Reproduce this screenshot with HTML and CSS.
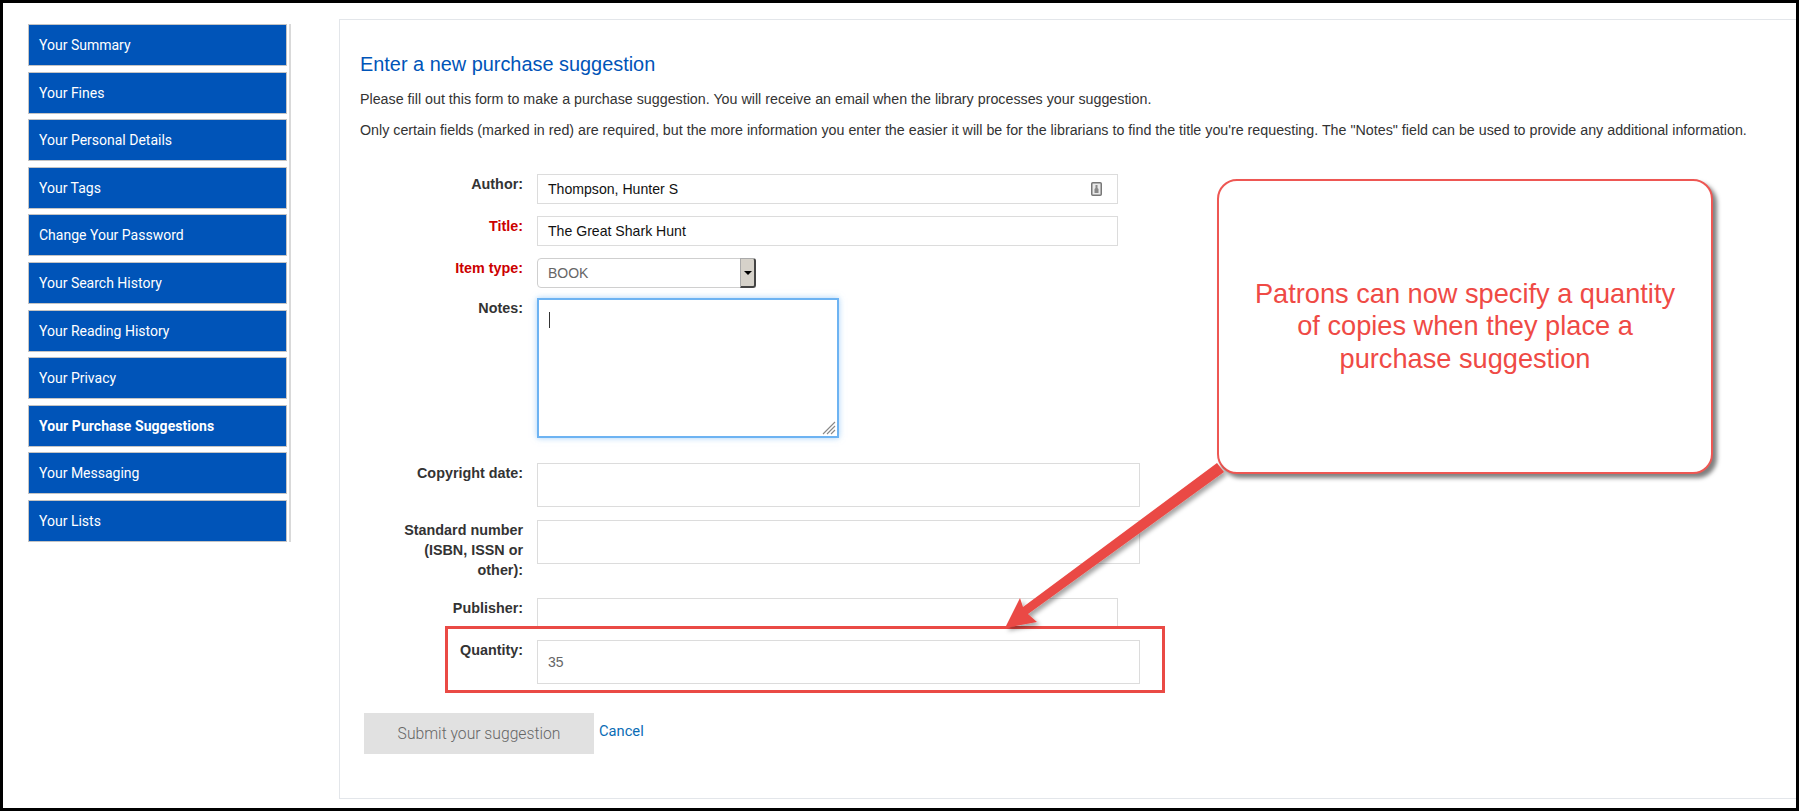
FILE: index.html
```html
<!DOCTYPE html>
<html lang="en">
<head>
<meta charset="utf-8">
<title>Enter a new purchase suggestion</title>
<link rel="stylesheet" href="styles.css">
</head>
<body>
<div class="frame">
  <nav class="side">
    <a class="side-item">Your Summary</a>
    <a class="side-item">Your Fines</a>
    <a class="side-item">Your Personal Details</a>
    <a class="side-item">Your Tags</a>
    <a class="side-item">Change Your Password</a>
    <a class="side-item">Your Search History</a>
    <a class="side-item">Your Reading History</a>
    <a class="side-item">Your Privacy</a>
    <a class="side-item active">Your Purchase Suggestions</a>
    <a class="side-item">Your Messaging</a>
    <a class="side-item">Your Lists</a>
  </nav>
  <main class="panel">
    <h1 class="title">Enter a new purchase suggestion</h1>
    <p class="para first">Please fill out this form to make a purchase suggestion. You will receive an email when the library processes your suggestion.</p>
    <p class="para">Only certain fields (marked in red) are required, but the more information you enter the easier it will be for the librarians to find the title you're requesting. The "Notes" field can be used to provide any additional information.</p>
    <form class="form">
      <div class="row row-author">
        <label class="lab">Author:</label>
        <div class="field w-short h-30 author-field">Thompson, Hunter S
          <svg class="card-icon" width="11" height="14" viewBox="0 0 11 14"><rect x="0.75" y="0.75" width="9.5" height="12.5" rx="1" fill="#e9e9e9" stroke="#777" stroke-width="1.5"/><path d="M4.5 3h2v3l1 1v4h-4V7l1-1z" fill="#888"/></svg>
        </div>
      </div>
      <div class="row row-title">
        <label class="lab req">Title:</label>
        <div class="field w-short h-30">The Great Shark Hunt</div>
      </div>
      <div class="row row-type">
        <label class="lab req">Item type:</label>
        <div class="select"><span class="select-text">BOOK</span><span class="select-btn"><i class="caret"></i></span></div>
      </div>
      <div class="row row-notes">
        <label class="lab">Notes:</label>
        <div class="notes"><i class="cursor"></i>
          <svg class="grip" width="14" height="14" viewBox="0 0 14 14"><path d="M1 13 13 1M5 13l8-8M9 13l4-4" stroke="#888" stroke-width="1.1"/></svg>
        </div>
      </div>
      <div class="row row-copy">
        <label class="lab">Copyright date:</label>
        <div class="field w-long h-44"></div>
      </div>
      <div class="row row-std">
        <label class="lab">Standard number (ISBN, ISSN or other):</label>
        <div class="field w-long h-44"></div>
      </div>
      <div class="row row-pub">
        <label class="lab">Publisher:</label>
        <div class="field w-short h-28 open"></div>
      </div>
      <div class="row row-qty">
        <label class="lab">Quantity:</label>
        <div class="field w-long h-44 muted">35</div>
      </div>
      <div class="actions">
        <button type="button" class="submit">Submit your suggestion</button>
        <a class="cancel">Cancel</a>
      </div>
    </form>
  </main>

  <div class="callout">Patrons can now specify a quantity of copies when they place a purchase suggestion</div>
  <div class="redbox"></div>
  <svg class="arrow" width="1799" height="811" viewBox="0 0 1799 811">
    <defs><filter id="sh" x="-10%" y="-10%" width="120%" height="120%"><feDropShadow dx="3" dy="3" stdDeviation="2" flood-color="#000" flood-opacity=".35"/></filter></defs>
    <path filter="url(#sh)" fill="#ea4a45" d="M1217 463 1224 472 1028 614 1037 622 1005 628 1020 598 1023 607Z"/>
  </svg>
</div>
</body>
</html>
```
FILE: styles.css
```css
* { box-sizing: border-box; }
html, body { margin: 0; height: 100%; }
body { background: #fff; overflow: hidden; }
.frame {
  position: relative;
  width: 1799px;
  height: 811px;
  border: 3px solid #000;
  display: flex;
  align-items: flex-start;
  font-family: "Liberation Sans", Arial, sans-serif;
  font-size: 13px;
  color: #333;
  overflow: hidden;
}
.side {
  width: 263px;
  margin: 21px 1px 0 25px;
  padding-right: 2px;
  border-right: 2px solid #d9d9d9;
  display: flex;
  flex-direction: column;
  gap: 5.6px;
}
.side-item {
  display: flex;
  align-items: center;
  height: 42px;
  padding-left: 10px;
  background: #0054b8;
  border: 1px solid #c4c4c4;
  color: #fff;
  font-family: Roboto, sans-serif;
  font-size: 14px;
}
.side-item.active { font-weight: 700; letter-spacing: 0.05px; }
.panel {
  width: 1457px;
  height: 780px;
  margin: 16px 0 0 47px;
  padding: 0 0 0 20px;
  border: 1px solid #e3e6ea;
  border-right: 0;
}
.title {
  margin: 31px 0 0;
  font-size: 19.9px;
  line-height: 26px;
  font-weight: 400;
  color: #0054b8;
}
.para { margin: 14px 0 0; line-height: 17px; font-size: 14.28px; color: #333; }
.para.first { margin-top: 14px; }
.form { display: flex; flex-direction: column; }
.row { display: flex; align-items: flex-start; gap: 14px; }
.lab {
  width: 163px;
  flex: none;
  padding-left: 33px;
  text-align: right;
  font-size: 14.35px;
  font-weight: 700;
  line-height: 20px;
  color: #333;
}
.lab.req { color: #cc0000; }
.field {
  display: flex;
  align-items: center;
  padding-left: 10px;
  border: 1px solid #dcdcdc;
  font-size: 14.1px;
  color: #111;
  background: #fff;
  position: relative;
}
.w-short { width: 581px; }
.w-long { width: 603px; }
.h-30 { height: 30px; }
.h-44 { height: 44px; }
.h-28 { height: 28px; }
.open { border-bottom: 0; }
.muted { color: #666; font-size: 14px; }
.card-icon { position: absolute; right: 15px; top: 7px; }
.row-author { margin-top: 35px; }
.row-title { margin-top: 12px; }
.row-type { margin-top: 12px; }
.row-notes { margin-top: 10px; }
.row-copy { margin-top: 25px; }
.row-std { margin-top: 13px; height: 78px; }
.row-pub { margin-top: 0; }
.row-qty { margin-top: 14px; }
.select {
  width: 219px;
  height: 30px;
  display: flex;
  align-items: center;
  justify-content: space-between;
  border: 1px solid #cfcfcf;
  border-radius: 4px;
  background: #fff;
  font-size: 14px;
  color: #666;
  padding-left: 10px;
}
.select-btn {
  width: 16px;
  height: 30px;
  margin-right: -1px;
  display: flex;
  align-items: center;
  justify-content: center;
  background: #d6d2ca;
  border: 1px solid #aaa;
  border-right: 2px solid #444;
  border-bottom: 2px solid #444;
  border-radius: 0 3px 3px 0;
}
.caret { width: 0; height: 0; border: 4px solid transparent; border-top: 4px solid #000; border-bottom: 0; }
.notes {
  width: 302px;
  height: 140px;
  position: relative;
  background: #fff;
  border: 2px solid #6db3f2;
  box-shadow: 0 0 6px rgba(109, 179, 242, .6);
}
.cursor { position: absolute; left: 10px; top: 12px; width: 1px; height: 16px; background: #333; }
.grip { position: absolute; right: 1px; bottom: 1px; }
.actions { display: flex; align-items: flex-start; margin-top: 29px; margin-left: 4px; gap: 5px; }
.submit {
  width: 230px;
  height: 41px;
  border: 0;
  background: #e1e1e1;
  color: #666;
  font-family: Roboto, sans-serif;
  font-size: 15.7px;
  font-weight: 300;
}
.cancel { color: #0a6cb5; font-family: Roboto, sans-serif; font-size: 14.7px; line-height: 20px; margin-top: 8px; }
.callout {
  position: absolute;
  left: 1214px;
  top: 176px;
  width: 496px;
  height: 295px;
  padding: 0 30px;
  display: flex;
  align-items: center;
  justify-content: center;
  text-align: center;
  font-size: 27.2px;
  line-height: 32.3px;
  color: #ef4a45;
  background: #fff;
  border: 2px solid #ee5753;
  border-radius: 20px;
  box-shadow: 4px 4px 4px rgba(0, 0, 0, .5);
}
.redbox {
  position: absolute;
  left: 442px;
  top: 623px;
  width: 720px;
  height: 67px;
  border: 3px solid #ea4a45;
}
.arrow { position: absolute; left: -3px; top: -3px; pointer-events: none; }
```
